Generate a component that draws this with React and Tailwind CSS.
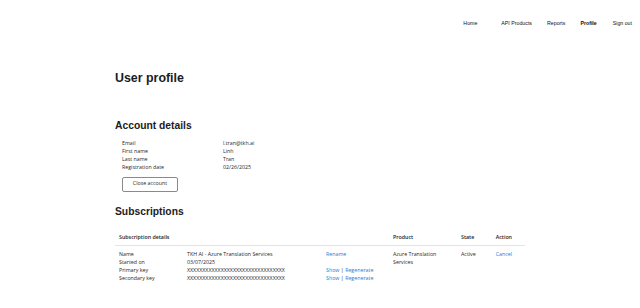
export default function App() {
  const body = "font-['Open_Sans',sans-serif] text-[5.3px] leading-[7.8px] text-[#1f1f1f]";
  const link = "text-[#2a78d6]";
  return (
    <div className="w-[640px] h-[308px] bg-white overflow-hidden">
      <nav className="h-[48px] flex items-center justify-end pr-[8px] font-['Liberation_Sans',Arial,sans-serif] text-[5.25px] text-[#111]">
        <span>Home</span>
        <span className="ml-[24px]">API Products</span>
        <span className="ml-[15px]">Reports</span>
        <span className="ml-[15px] font-bold">Profile</span>
        <span className="ml-[16px]">Sign out</span>
      </nav>
      <main className="pl-[115px]">
        <h1 className="mt-[22.5px] font-['Liberation_Sans',Arial,sans-serif] font-bold text-[12.4px] leading-[15px] text-[#1c1c1c]">
          User profile
        </h1>
        <h2 className="mt-[34.5px] font-['Liberation_Sans',Arial,sans-serif] font-bold text-[10.3px] leading-[12px] text-[#1c1c1c]">
          Account details
        </h2>
        <div className={`mt-[8.4px] pl-[7px] ${body}`}>
          <div className="grid grid-cols-[101px_1fr]">
            <span>Email</span><span>l.tran@tkh.ai</span>
            <span>First name</span><span>Linh</span>
            <span>Last name</span><span>Tran</span>
            <span>Registration date</span><span>02/26/2025</span>
          </div>
          <button className="mt-[5px] w-[56px] h-[15px] border border-[#8a8a8a] rounded-[2px] bg-white text-[#1f1f1f] flex items-center justify-center">
            Close account
          </button>
        </div>
        <h2 className="mt-[14.3px] font-['Liberation_Sans',Arial,sans-serif] font-bold text-[10.3px] leading-[12px] text-[#1c1c1c]">
          Subscriptions
        </h2>
        <div className={`mt-[12px] w-[410px] ${body}`}>
          <div className="grid grid-cols-[278px_68px_34.7px_1fr] h-[16.5px] items-center border-b border-[#e3e3e3] font-semibold text-[#1a1a1a]">
            <span className="pl-[4px]">Subscription details</span>
            <span>Product</span>
            <span>State</span>
            <span>Action</span>
          </div>
          <div className="grid grid-cols-[278px_68px_34.7px_1fr] pt-[5px]">
            <div className="pl-[4px] grid grid-cols-[68px_139px_1fr]">
              <span>Name</span><span>TKH AI - Azure Translation Services</span><span className={link}>Rename</span>
              <span>Started on</span><span>03/07/2025</span><span></span>
              <span>Primary key</span><span>XXXXXXXXXXXXXXXXXXXXXXXXXXXXXXXX</span>
              <span><span className={link}>Show</span> | <span className={link}>Regenerate</span></span>
              <span>Secondary key</span><span>XXXXXXXXXXXXXXXXXXXXXXXXXXXXXXXX</span>
              <span><span className={link}>Show</span> | <span className={link}>Regenerate</span></span>
            </div>
            <div>Azure Translation<br />Services</div>
            <div>Active</div>
            <div className={link}>Cancel</div>
          </div>
        </div>
      </main>
    </div>
  );
}
